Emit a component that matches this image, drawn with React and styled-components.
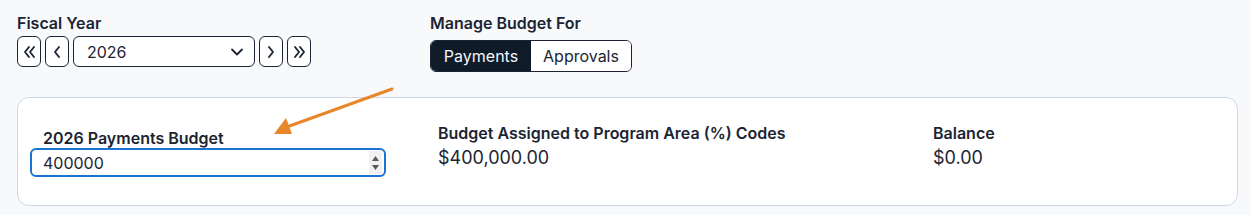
import React from 'react';
import styled, { createGlobalStyle } from 'styled-components';

const GlobalStyle = createGlobalStyle`
  html, body {
    margin: 0;
    padding: 0;
    background: #f8f9fb;
    font-family: Inter, "Noto Sans", sans-serif;
    color: #1c2433;
  }
`;

const Page = styled.div`
  position: relative;
  width: 1250px;
  height: 215px;
  padding: 13px 12px 0 17px;
  box-sizing: border-box;
`;

const TopRow = styled.div`
  display: flex;
  align-items: flex-start;
  gap: 119px;
`;

const Field = styled.div`
  display: flex;
  flex-direction: column;
  gap: ${(p) => p.gap || 4}px;
`;

const Label = styled.div`
  font-size: 16px;
  font-weight: 600;
  line-height: 20px;
  color: #1c2433;
`;

const Nav = styled.div`
  display: flex;
  align-items: center;
  gap: 4px;
`;

const NavButton = styled.button`
  width: 24px;
  height: 31px;
  padding: 0;
  border: 1px solid #1c2433;
  border-radius: 6px;
  background: #fff;
  display: flex;
  align-items: center;
  justify-content: center;
  color: #1c2433;
  cursor: pointer;
`;

const Select = styled.div`
  width: 182px;
  height: 31px;
  box-sizing: border-box;
  border: 1px solid #1c2433;
  border-radius: 6px;
  background: #fff;
  display: flex;
  align-items: center;
  justify-content: space-between;
  padding: 0 10px 0 13px;
  font-size: 16px;
  color: #1c2433;
`;

const Toggle = styled.div`
  display: flex;
  margin-top: 4px;
  height: 32px;
  box-sizing: border-box;
  border: 1px solid #1c2433;
  border-radius: 6px;
  overflow: hidden;
`;

const ToggleButton = styled.button`
  border: none;
  margin: 0;
  padding: 0;
  font-family: inherit;
  font-size: 16px;
  background: ${(p) => (p.active ? '#0f1b29' : '#fff')};
  color: ${(p) => (p.active ? '#f4f6f8' : '#1c2433')};
  width: ${(p) => p.w}px;
  cursor: pointer;
`;

const Card = styled.div`
  margin-top: 25px;
  width: 1221px;
  height: 109px;
  box-sizing: border-box;
  border: 1px solid #cfd9e3;
  border-radius: 12px;
  background: #fff;
  display: grid;
  grid-template-columns: 408px 495px 1fr;
  padding: 25px 0 0 12px;
`;

const Col = styled.div`
  display: flex;
  flex-direction: column;
  padding-top: ${(p) => p.top || 0}px;
`;

const IndentLabel = styled(Label)`
  padding-left: 13px;
`;

const NumberInput = styled.div`
  width: 356px;
  height: 29px;
  box-sizing: border-box;
  border: 2px solid #1a73d1;
  border-radius: 6px;
  display: flex;
  align-items: center;
  justify-content: space-between;
  padding: 0 2px 0 11px;
  font-size: 16px;
  color: #1c2433;
`;

const Spinner = styled.div`
  width: 13px;
  height: 23px;
  background: #f1f1f1;
  display: flex;
  flex-direction: column;
  align-items: center;
  justify-content: center;
  gap: 4px;
`;

const Value = styled.div`
  font-size: 18px;
  line-height: 22px;
  margin-top: 4px;
  color: #1c2433;
`;

const Arrow = styled.svg`
  position: absolute;
  left: 260px;
  top: 80px;
  pointer-events: none;
`;

const Chevron = ({ dir = 'left', double }) => {
  const single = dir === 'left' ? 'M9 3 L5 8 L9 13' : 'M5 3 L9 8 L5 13';
  const dbl =
    dir === 'left'
      ? 'M7 3 L3 8 L7 13 M12 3 L8 8 L12 13'
      : 'M3 3 L7 8 L3 13 M8 3 L12 8 L8 13';
  return (
    <svg width="14" height="16" viewBox="0 0 14 16" fill="none">
      <path
        d={double ? dbl : single}
        stroke="currentColor"
        strokeWidth="1.9"
        strokeLinecap="round"
        strokeLinejoin="round"
      />
    </svg>
  );
};

const Caret = () => (
  <svg width="14" height="10" viewBox="0 0 14 10" fill="none">
    <path d="M2 2.5 L7 7.5 L12 2.5" stroke="#1c2433" strokeWidth="1.8" strokeLinecap="round" strokeLinejoin="round" />
  </svg>
);

const Tri = ({ up }) => (
  <svg width="7" height="5" viewBox="0 0 7 5">
    <path d={up ? 'M0 5 L3.5 0 L7 5 Z' : 'M0 0 L3.5 5 L7 0 Z'} fill="#5a5a5a" />
  </svg>
);

export default function App() {
  return (
    <>
      <GlobalStyle />
      <Page>
        <TopRow>
          <Field gap={3}>
            <Label>Fiscal Year</Label>
            <Nav>
              <NavButton><Chevron dir="left" double /></NavButton>
              <NavButton><Chevron dir="left" /></NavButton>
              <Select>
                <span>2026</span>
                <Caret />
              </Select>
              <NavButton><Chevron dir="right" /></NavButton>
              <NavButton><Chevron dir="right" double /></NavButton>
            </Nav>
          </Field>
          <Field gap={3}>
            <Label>Manage Budget For</Label>
            <Toggle>
              <ToggleButton active w={100}>Payments</ToggleButton>
              <ToggleButton w={100}>Approvals</ToggleButton>
            </Toggle>
          </Field>
        </TopRow>
        <Card>
          <Col top={5}>
            <IndentLabel>2026 Payments Budget</IndentLabel>
            <NumberInput>
              <span>400000</span>
              <Spinner>
                <Tri up />
                <Tri />
              </Spinner>
            </NumberInput>
          </Col>
          <Col>
            <Label>Budget Assigned to Program Area (%) Codes</Label>
            <Value>$400,000.00</Value>
          </Col>
          <Col>
            <Label>Balance</Label>
            <Value>$0.00</Value>
          </Col>
        </Card>
        <Arrow width="140" height="60" viewBox="0 0 140 60">
          <line x1="132" y1="9" x2="24" y2="48" stroke="#e8862a" strokeWidth="3" strokeLinecap="round" />
          <path d="M14 54 L26 38 L32 54 Z" fill="#e8862a" />
        </Arrow>
      </Page>
    </>
  );
}
